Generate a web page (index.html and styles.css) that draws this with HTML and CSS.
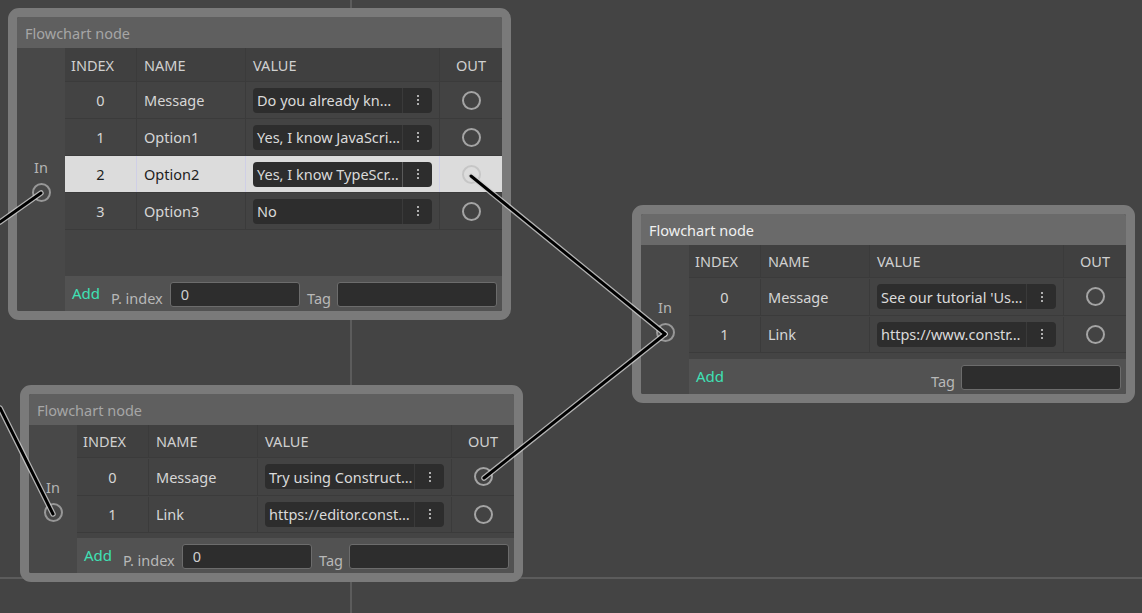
FILE: index.html
```html
<!DOCTYPE html>
<html lang="en">

<head>
  <meta charset="UTF-8">
  <meta name="viewport" content="width=device-width, initial-scale=1.0">
  <title>Flowchart</title>
  <link rel="stylesheet" href="styles.css">
</head>

<body>
  <div class="canvas">
    <div class="grid-line grid-v"></div>
    <div class="grid-line grid-h"></div>

    <!-- Node 1 -->
    <div class="node node-a">
      <div class="node-title">Flowchart node</div>
      <div class="node-body">
        <div class="node-in">
          <span class="in-label">In</span>
          <span class="port"></span>
        </div>
        <div class="node-table">
          <div class="trow thead">
            <div class="cell">INDEX</div>
            <div class="cell">NAME</div>
            <div class="cell">VALUE</div>
            <div class="cell cell-out">OUT</div>
          </div>
          <div class="tbody">
            <div class="trow">
              <div class="cell cell-index">0</div>
              <div class="cell">Message</div>
              <div class="cell"><div class="pill"><span class="pill-text">Do you already kn…</span><span class="pill-menu"><svg width="4" height="12" viewBox="0 0 4 12"><circle cx="2" cy="2" r="1.1"/><circle cx="2" cy="6" r="1.1"/><circle cx="2" cy="10" r="1.1"/></svg></span></div></div>
              <div class="cell cell-out"><span class="port"></span></div>
            </div>
            <div class="trow">
              <div class="cell cell-index">1</div>
              <div class="cell">Option1</div>
              <div class="cell"><div class="pill"><span class="pill-text">Yes, I know JavaScri…</span><span class="pill-menu"><svg width="4" height="12" viewBox="0 0 4 12"><circle cx="2" cy="2" r="1.1"/><circle cx="2" cy="6" r="1.1"/><circle cx="2" cy="10" r="1.1"/></svg></span></div></div>
              <div class="cell cell-out"><span class="port"></span></div>
            </div>
            <div class="trow trow-active">
              <div class="cell cell-index">2</div>
              <div class="cell">Option2</div>
              <div class="cell"><div class="pill"><span class="pill-text">Yes, I know TypeScr…</span><span class="pill-menu"><svg width="4" height="12" viewBox="0 0 4 12"><circle cx="2" cy="2" r="1.1"/><circle cx="2" cy="6" r="1.1"/><circle cx="2" cy="10" r="1.1"/></svg></span></div></div>
              <div class="cell cell-out"><span class="port"></span></div>
            </div>
            <div class="trow">
              <div class="cell cell-index">3</div>
              <div class="cell">Option3</div>
              <div class="cell"><div class="pill"><span class="pill-text">No</span><span class="pill-menu"><svg width="4" height="12" viewBox="0 0 4 12"><circle cx="2" cy="2" r="1.1"/><circle cx="2" cy="6" r="1.1"/><circle cx="2" cy="10" r="1.1"/></svg></span></div></div>
              <div class="cell cell-out"><span class="port"></span></div>
            </div>
          </div>
          <div class="tfoot">
            <span class="add">Add</span>
            <span class="foot-label label-index">P. index</span>
            <input class="foot-input input-index" type="text" value="0">
            <span class="foot-label label-tag">Tag</span>
            <input class="foot-input input-tag" type="text" value="">
          </div>
        </div>
      </div>
    </div>

    <!-- Node 2 (selected) -->
    <div class="node node-b node-selected">
      <div class="node-title">Flowchart node</div>
      <div class="node-body">
        <div class="node-in">
          <span class="in-label">In</span>
          <span class="port"></span>
        </div>
        <div class="node-table">
          <div class="trow thead">
            <div class="cell">INDEX</div>
            <div class="cell">NAME</div>
            <div class="cell">VALUE</div>
            <div class="cell cell-out">OUT</div>
          </div>
          <div class="tbody">
            <div class="trow">
              <div class="cell cell-index">0</div>
              <div class="cell">Message</div>
              <div class="cell"><div class="pill"><span class="pill-text">See our tutorial 'Us…</span><span class="pill-menu"><svg width="4" height="12" viewBox="0 0 4 12"><circle cx="2" cy="2" r="1.1"/><circle cx="2" cy="6" r="1.1"/><circle cx="2" cy="10" r="1.1"/></svg></span></div></div>
              <div class="cell cell-out"><span class="port"></span></div>
            </div>
            <div class="trow">
              <div class="cell cell-index">1</div>
              <div class="cell">Link</div>
              <div class="cell"><div class="pill"><span class="pill-text">https://www.constr…</span><span class="pill-menu"><svg width="4" height="12" viewBox="0 0 4 12"><circle cx="2" cy="2" r="1.1"/><circle cx="2" cy="6" r="1.1"/><circle cx="2" cy="10" r="1.1"/></svg></span></div></div>
              <div class="cell cell-out"><span class="port"></span></div>
            </div>
          </div>
          <div class="tfoot">
            <span class="add">Add</span>
            <span class="foot-label label-tag">Tag</span>
            <input class="foot-input input-tag" type="text" value="">
          </div>
        </div>
      </div>
    </div>

    <!-- Node 3 -->
    <div class="node node-c">
      <div class="node-title">Flowchart node</div>
      <div class="node-body">
        <div class="node-in">
          <span class="in-label">In</span>
          <span class="port"></span>
        </div>
        <div class="node-table">
          <div class="trow thead">
            <div class="cell">INDEX</div>
            <div class="cell">NAME</div>
            <div class="cell">VALUE</div>
            <div class="cell cell-out">OUT</div>
          </div>
          <div class="tbody">
            <div class="trow">
              <div class="cell cell-index">0</div>
              <div class="cell">Message</div>
              <div class="cell"><div class="pill"><span class="pill-text">Try using Construct…</span><span class="pill-menu"><svg width="4" height="12" viewBox="0 0 4 12"><circle cx="2" cy="2" r="1.1"/><circle cx="2" cy="6" r="1.1"/><circle cx="2" cy="10" r="1.1"/></svg></span></div></div>
              <div class="cell cell-out"><span class="port"></span></div>
            </div>
            <div class="trow">
              <div class="cell cell-index">1</div>
              <div class="cell">Link</div>
              <div class="cell"><div class="pill"><span class="pill-text">https://editor.const…</span><span class="pill-menu"><svg width="4" height="12" viewBox="0 0 4 12"><circle cx="2" cy="2" r="1.1"/><circle cx="2" cy="6" r="1.1"/><circle cx="2" cy="10" r="1.1"/></svg></span></div></div>
              <div class="cell cell-out"><span class="port"></span></div>
            </div>
          </div>
          <div class="tfoot">
            <span class="add">Add</span>
            <span class="foot-label label-index">P. index</span>
            <input class="foot-input input-index" type="text" value="0">
            <span class="foot-label label-tag">Tag</span>
            <input class="foot-input input-tag" type="text" value="">
          </div>
        </div>
      </div>
    </div>

    <!-- Connections -->
    <svg class="links" width="1142" height="613" viewBox="0 0 1142 613">
      <g class="link-halo">
        <path d="M0 222 L41 193" />
        <path d="M471 176 L665 334" />
        <path d="M484 478 L665 334" />
        <path d="M0 408 L53 514" />
      </g>
      <g class="link-core">
        <path d="M0 222 L41 193" />
        <path d="M471 176 L665 334" />
        <path d="M484 478 L665 334" />
        <path d="M0 408 L53 514" />
      </g>
    </svg>
  </div>
</body>

</html>
```

FILE: styles.css
```css
body {
  margin: 0;
  background-color: #444444;
  font-family: "Noto Sans", "Open Sans", sans-serif;
}

.canvas {
  position: relative;
  width: 1142px;
  height: 613px;
  overflow: hidden;
  background-color: #444444;
}

.grid-line {
  position: absolute;
  background-color: #5c5c5c;
}

.grid-v {
  left: 350px;
  top: 0;
  width: 2px;
  height: 613px;
}

.grid-h {
  left: 0;
  top: 577px;
  width: 1142px;
  height: 2px;
}

/* nodes sit on a free canvas */
.node {
  position: absolute;
  box-sizing: border-box;
  width: 503px;
  border: 9px solid #7a7a7a;
  border-radius: 11px;
  display: flex;
  flex-direction: column;
  overflow: hidden;
  background-color: #484848;
}

.node-a {
  left: 8px;
  top: 8px;
  height: 312px;
}

.node-b {
  left: 632px;
  top: 205px;
  height: 198px;
}

.node-c {
  left: 20px;
  top: 385px;
  height: 197px;
}

.node-title {
  height: 31px;
  box-sizing: border-box;
  padding: 2px 0 0 8px;
  line-height: 29px;
  background-color: #5f5f5f;
  color: #a6a6a6;
  font-size: 14.5px;
}

.node-selected .node-title {
  background-color: #6a6a6a;
  color: #f0f0f0;
}

.node-body {
  flex: 1;
  display: flex;
}

.node-in {
  width: 48px;
  display: flex;
  flex-direction: column;
  align-items: center;
  justify-content: center;
  gap: 6px;
  background-color: #484848;
}

.in-label {
  color: #b4b4b4;
  font-size: 14.5px;
  line-height: 20px;
}

.port {
  display: block;
  box-sizing: border-box;
  width: 19px;
  height: 19px;
  border: 2px solid #a4a4a4;
  border-radius: 50%;
}

.node-in .port {
  border-color: #979797;
}

.node-table {
  width: 437px;
  display: flex;
  flex-direction: column;
  background-color: #444444;
}

.trow {
  display: grid;
  grid-template-columns: 72px 109px 194px 62px;
  height: 37px;
  box-sizing: border-box;
  border-bottom: 1px solid #3b3b3b;
  background-color: #434343;
  color: #d6d6d6;
  font-size: 14.5px;
}

.thead {
  height: 34px;
  background-color: #404040;
  color: #d0d0d0;
}

.node-b .thead,
.node-c .thead {
  height: 33px;
}

.cell {
  display: flex;
  align-items: center;
  padding-left: 7px;
  border-right: 1px solid #3b3b3b;
  min-width: 0;
}

.thead .cell:first-child {
  padding-left: 6px;
}

.cell:last-child {
  border-right: none;
}

.cell-index {
  justify-content: center;
  padding-left: 0;
}

.cell-out {
  justify-content: center;
  padding-left: 0;
}

.tbody {
  flex: 1;
}

.node-b .trow:not(.thead),
.node-c .trow:not(.thead) {
  height: 37.5px;
  padding-top: 1px;
}

.trow-active {
  background-color: #dcdcdc;
  color: #1e1e1e;
}

.trow-active .cell {
  border-right-color: #cfcfe6;
}

.trow-active .port {
  border-color: #c6c6c6;
}

.pill {
  display: flex;
  align-items: center;
  width: 179px;
  height: 25px;
  border-radius: 4px;
  background-color: #2d2d2d;
  color: #dadada;
}

.pill-text {
  flex: 1;
  padding-left: 4px;
  overflow: hidden;
  white-space: nowrap;
  text-overflow: ellipsis;
}

.pill-menu {
  width: 29px;
  height: 25px;
  display: flex;
  align-items: center;
  justify-content: center;
  border-left: 1px solid #3a3a3a;
  fill: #cfcfcf;
}

.trow-active .pill-menu {
  border-left-color: #5a5a5a;
}

.tfoot {
  display: flex;
  align-items: center;
  height: 35px;
  padding: 0 5px 0 7px;
  background-color: #525252;
}

.add {
  color: #3fe0b5;
  font-size: 15px;
  margin-right: 11px;
  margin-top: -1px;
}

.foot-label {
  color: #b8b8b8;
  font-size: 14.5px;
  margin-top: 8px;
}

.label-index {
  margin-right: 7px;
}

.label-tag {
  margin-left: auto;
  margin-right: 6px;
}

.foot-input {
  box-sizing: border-box;
  height: 25px;
  margin-top: 1px;
  padding: 0 10px;
  border: 1px solid #6c6c6c;
  border-radius: 3px;
  background-color: #2d2d2d;
  color: #d0d0d0;
  font-family: "Noto Sans", "Open Sans", sans-serif;
  font-size: 14.5px;
  outline: none;
}

.input-index {
  width: 130px;
}

.input-tag {
  width: 160px;
}

.links {
  position: absolute;
  left: 0;
  top: 0;
  pointer-events: none;
}

.link-halo path {
  fill: none;
  stroke: #cfcfcf;
  stroke-width: 5.5;
  stroke-linecap: round;
  opacity: 0.8;
}

.link-core path {
  fill: none;
  stroke: #000000;
  stroke-width: 3;
  stroke-linecap: round;
}
```
